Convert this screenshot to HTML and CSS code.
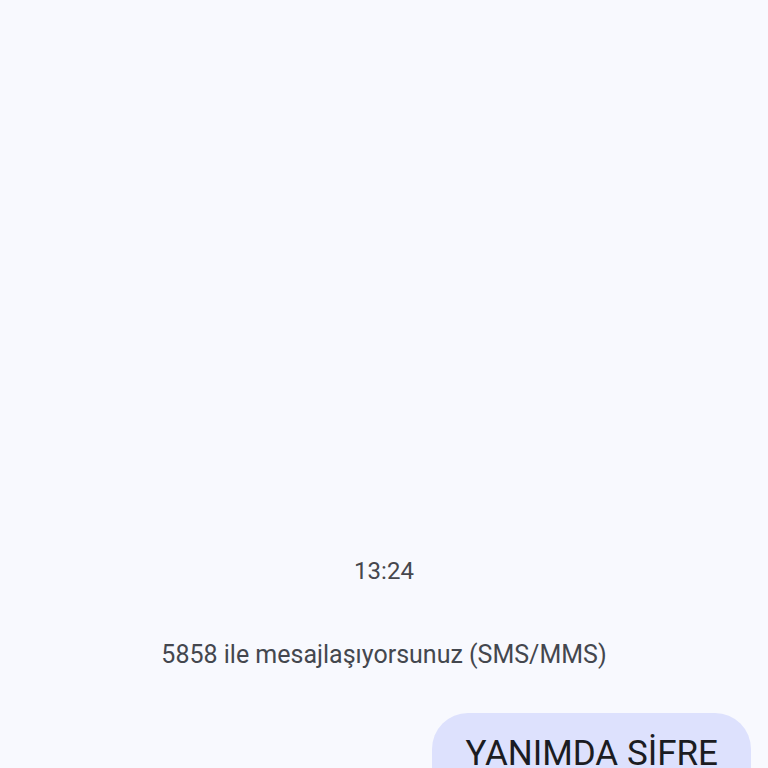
FILE: index.html
```html
<!DOCTYPE html>
<html lang="tr">
<head>
<meta charset="utf-8">
<link rel="stylesheet" href="styles.css">
</head>
<body>
<div class="screen">
  <div class="spacer"></div>
  <div class="time">13:24</div>
  <div class="info">5858 ile mesajlaşıyorsunuz (SMS/MMS)</div>
  <div class="row">
    <div class="bubble">YANIMDA SİFRE</div>
  </div>
</div>
</body>
</html>
```
FILE: styles.css
```css
html, body {
  margin: 0;
  padding: 0;
  background: #f8f9fe;
  overflow: hidden;
}
.screen {
  width: 768px;
  height: 768px;
  display: flex;
  flex-direction: column;
  font-family: Roboto, "Noto Sans", sans-serif;
  overflow: hidden;
}
.spacer {
  height: 554px;
  flex: none;
}
.time {
  text-align: center;
  font-size: 24px;
  line-height: 34px;
  color: #46474d;
}
.info {
  margin-top: 50px;
  text-align: center;
  font-size: 25px;
  line-height: 34px;
  color: #44474e;
}
.row {
  margin-top: 41px;
  display: flex;
  justify-content: flex-end;
  padding-right: 17px;
}
.bubble {
  background: #dde1fd;
  border-radius: 36px;
  padding: 21px 33px 30px 33px;
  font-size: 35px;
  line-height: 40px;
  color: #1b1c22;
}
```
